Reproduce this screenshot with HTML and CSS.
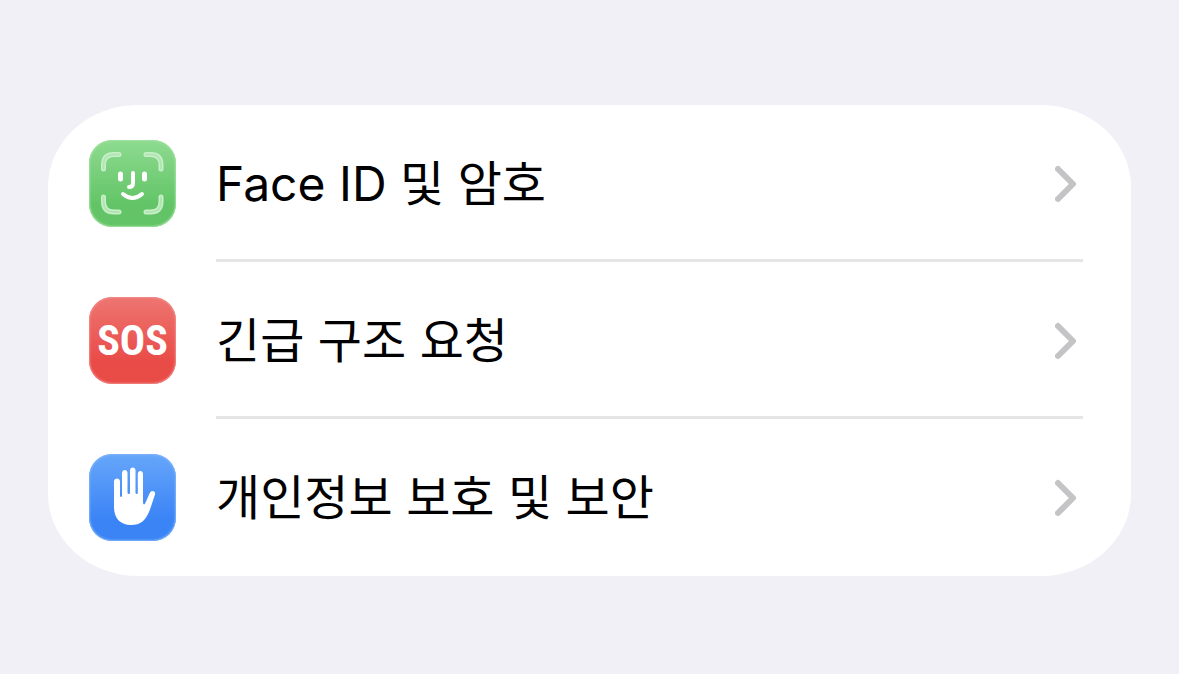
FILE: index.html
```html
<!DOCTYPE html>
<html lang="ko">
<head>
  <meta charset="UTF-8" />
  <meta name="viewport" content="width=device-width, initial-scale=1" />
  <title>설정</title>
  <link rel="stylesheet" href="styles.css">
</head>
<body>
  <main class="settings">
    <ul class="list">
      <li>
        <a class="row" href="#face-id">
          <span class="icon icon-green">
            <svg viewBox="0 0 87 87" fill="none" stroke-linecap="round" aria-hidden="true">
              <g stroke="#c9efca" stroke-width="5">
                <path d="M14.5 29V25Q14.5 14.5 25 14.5H30"/>
                <path d="M57 14.5H61.5Q72 14.5 72 25V29"/>
                <path d="M72 57V61.5Q72 72 61.5 72H57"/>
                <path d="M30 72H25Q14.5 72 14.5 61.5V57"/>
              </g>
              <g stroke="#b0e6b1" stroke-width="2">
                <path d="M14.5 29V25Q14.5 14.5 25 14.5H30"/>
                <path d="M57 14.5H61.5Q72 14.5 72 25V29"/>
                <path d="M72 57V61.5Q72 72 61.5 72H57"/>
                <path d="M30 72H25Q14.5 72 14.5 61.5V57"/>
              </g>
              <g stroke="#fff">
                <path stroke-width="5" d="M31.5 34V39M55.5 34V39"/>
                <path stroke-width="4" d="M44 33V43Q44 47 40 47"/>
                <path stroke-width="4" d="M34 54Q43.5 62 53 54"/>
              </g>
            </svg>
          </span>
          <span class="label">Face ID 및 암호</span>
          <svg class="chevron" viewBox="0 0 22 38" aria-hidden="true"><path d="M3 4L18 19L3 34"/></svg>
        </a>
      </li>
      <li>
        <a class="row" href="#sos">
          <span class="icon icon-red"><span class="sos">SOS</span></span>
          <span class="label">긴급 구조 요청</span>
          <svg class="chevron" viewBox="0 0 22 38" aria-hidden="true"><path d="M3 4L18 19L3 34"/></svg>
        </a>
      </li>
      <li>
        <a class="row" href="#privacy">
          <span class="icon icon-blue">
            <svg viewBox="0 0 87 87" fill="#fff" aria-hidden="true">
              <path d="M25 27.5C25 23.5 31 23.5 31 27.5V41.5Q31.2 43 32 43Q33 43 33 41.5V19C33 15 38.5 15 38.5 19V39Q38.7 40 39.700 40Q41 40 41 39V16.5C41 12.5 46.5 12.5 46.5 16.5V39Q46.8 40 47.8 40Q48.8 40 48.8 39V20C48.8 16 54 16 54 20V48Q54 50 55 50.5Q56 50 57 47.5L60.5 39.5C62 35.5 67 36.5 66 40.5L61 55.5C57 66.5 51.5 71 42 71C31 71 25 64 25 53Z"/>
            </svg>
          </span>
          <span class="label">개인정보 보호 및 보안</span>
          <svg class="chevron" viewBox="0 0 22 38" aria-hidden="true"><path d="M3 4L18 19L3 34"/></svg>
        </a>
      </li>
    </ul>
  </main>
</body>
</html>
```
FILE: styles.css
```css
* {
  box-sizing: border-box;
}
body {
  margin: 0;
  background-color: #f1f0f6;
  color: #000;
  font-family: Inter, "Noto Sans CJK KR", sans-serif;
}
.settings {
  padding: 105px 48px 98px;
}
.list {
  margin: 0;
  padding: 0;
  list-style: none;
  background-color: #fff;
  border-radius: 90px / 82px;
  overflow: hidden;
}
.row {
  display: grid;
  grid-template-columns: 87px 1fr 22px;
  align-items: center;
  column-gap: 40px;
  padding: 35px 54px 0 41px;
  color: inherit;
  text-decoration: none;
}
.row::after {
  content: "";
  grid-column: 2 / 4;
  height: 3px;
  margin: 32px -6px 0 0;
  background-color: #e5e5e5;
}
li:last-child .row::after {
  background-color: transparent;
}
.icon {
  display: flex;
  align-items: center;
  justify-content: center;
  height: 87px;
  border-radius: 23px;
  overflow: hidden;
}
.icon svg {
  width: 100%;
  height: 100%;
}
.icon-green {
  background: linear-gradient(#8edb90, #62c466 75%);
  box-shadow: inset 0 0 2px 1px #a3e2a4;
}
.icon-red {
  background: linear-gradient(#ee7571, #e94b47 75%);
  box-shadow: inset 0 0 2px 1px #f28e8b;
}
.icon-blue {
  background: linear-gradient(#66a6fa, #3b84f6 75%);
  box-shadow: inset 0 0 2px 1px #80b5fa;
}
.sos {
  color: #fff;
  font-family: "Roboto Condensed", "Liberation Sans Narrow", Roboto, sans-serif;
  font-size: 42px;
  font-weight: bold;
}
.label {
  font-size: 48px;
  line-height: 72px;
  white-space: nowrap;
}
.chevron {
  width: 22px;
  height: 38px;
  fill: none;
  stroke: #c4c4c6;
  stroke-width: 6;
  stroke-linecap: round;
  stroke-linejoin: round;
}
```
